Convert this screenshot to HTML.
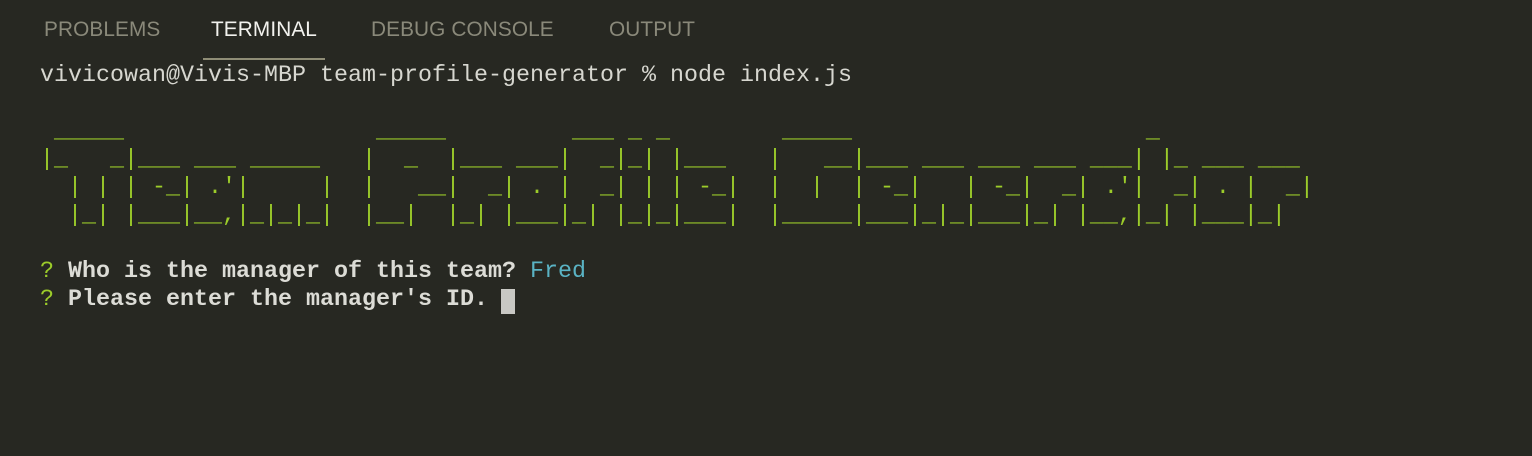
<!DOCTYPE html>
<html><head><meta charset="utf-8"><style>
html,body{margin:0;padding:0;background:#272822;width:1532px;height:456px;overflow:hidden}
.tabs{position:absolute;top:18px;left:0;font-family:"Liberation Sans",sans-serif;font-size:20.8px;color:#8a897a;letter-spacing:0.1px}
.tabs span{position:absolute;white-space:nowrap;top:0}
.act{color:#f2f2ee}
.ul{position:absolute;left:203px;top:58px;width:122px;height:2px;background:#8f8d76}
pre{position:absolute;left:40px;top:62px;margin:0;font-family:"Liberation Mono",monospace;font-size:23.33px;line-height:28px;color:#d7d7d0}
.g{color:#9ccc2a}
.c{color:#5ab3c4}
b{font-weight:bold;color:#dcdcd6}
.cur{position:absolute;left:501px;top:289px;width:14px;height:25px;background:#c8c8c4}
</style></head><body>
<div class="tabs">
<span style="left:44px">PROBLEMS</span>
<span class="act" style="left:211px">TERMINAL</span>
<span style="left:371px">DEBUG CONSOLE</span>
<span style="left:609px">OUTPUT</span>
</div>
<div class="ul"></div>
<pre>vivicowan@Vivis-MBP team-profile-generator % node index.js

<span class="g"> _____                  _____         ___ _ _        _____                     _
|_   _|___ ___ _____   |  _  |___ ___|  _|_| |___   |   __|___ ___ ___ ___ ___| |_ ___ ___
  | | | -_| .'|     |  |   __|  _| . |  _| | | -_|  |  |  | -_|   | -_|  _| .'|  _| . |  _|
  |_| |___|__,|_|_|_|  |__|  |_| |___|_| |_|_|___|  |_____|___|_|_|___|_| |__,|_| |___|_|</span>

<span class="g">?</span> <b>Who is the manager of this team?</b> <span class="c">Fred</span>
<span class="g">?</span> <b>Please enter the manager's ID.</b></pre>
<div class="cur"></div>
</body></html>
